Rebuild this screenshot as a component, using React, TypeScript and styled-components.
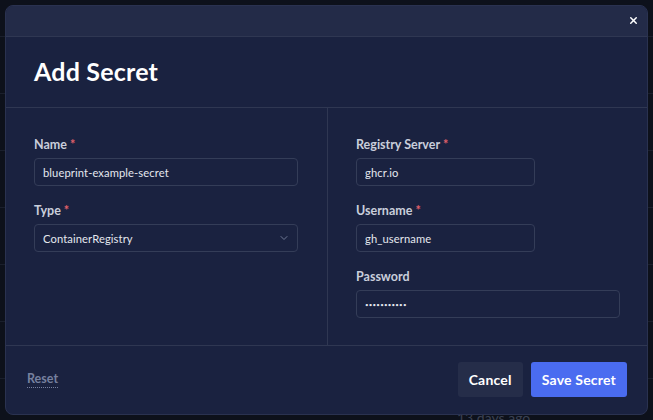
import React from "react";
import styled, { createGlobalStyle } from "styled-components";
import { X, ChevronDown } from "lucide-react";

const Global = createGlobalStyle`
  html, body { margin: 0; padding: 0; background: #0d111b; }
  body { font-family: "Lato", "Noto Sans", sans-serif; width: 653px; height: 420px; overflow: hidden; }
  * { box-sizing: border-box; }
`;

const Page = styled.div`
  width: 653px;
  height: 420px;
  position: relative;
  overflow: hidden;
  background: #0d111b;
  padding-top: 36px;
`;

const BgRow = styled.div`
  height: 57px;
  border-top: 1px solid #1a1f2c;
  padding: 30px 0 0 457px;
  color: #3b4152;
  font-size: 14px;
  line-height: 17px;
`;

const Modal = styled.div`
  position: absolute;
  left: 5px;
  top: 5px;
  width: 643px;
  height: 410px;
  background: #1a2240;
  border: 1px solid #2a3250;
  border-radius: 8px;
  overflow: hidden;
  display: flex;
  flex-direction: column;
`;

const TopBar = styled.div`
  height: 31px;
  flex: none;
  background: #232b48;
  border-bottom: 1px solid #2f3752;
  display: flex;
  align-items: center;
  justify-content: flex-end;
  padding: 0 8px 1px 0;
`;

const CloseBtn = styled.button`
  background: none;
  border: none;
  padding: 0;
  color: #ffffff;
  display: flex;
  cursor: pointer;
`;

const TitleArea = styled.div`
  height: 71px;
  flex: none;
  border-bottom: 1px solid #2f3752;
  display: flex;
  align-items: center;
  padding-left: 28px;
`;

const Title = styled.h1`
  margin: 0 0 3px;
  font-size: 25px;
  font-weight: 700;
  color: #ffffff;
  letter-spacing: 0.2px;
`;

const Body = styled.div`
  flex: 1;
  display: grid;
  grid-template-columns: 322px 1fr;
  border-bottom: 1px solid #2f3752;
`;

const Column = styled.div<{ $divider?: boolean }>`
  padding: 28px 28px 0 28px;
  display: flex;
  flex-direction: column;
  gap: 16px;
  border-right: ${(p) => (p.$divider ? "1px solid #2f3752" : "none")};
`;

const Field = styled.div`
  display: flex;
  flex-direction: column;
  gap: 4px;
`;

const Label = styled.label`
  font-size: 12.5px;
  font-weight: 700;
  line-height: 18px;
  color: #c9cedb;
`;

const Req = styled.span`
  color: #e0606a;
  margin-left: 3px;
`;

const Input = styled.input<{ $w: number; $dots?: boolean }>`
  width: ${(p) => p.$w}px;
  height: 28px;
  background: #1a2240;
  border: 1px solid #343d58;
  border-radius: 4px;
  color: #e4e7ee;
  font-family: "Lato", "Noto Sans", sans-serif;
  font-size: ${(p) => (p.$dots ? "6.2px" : "11.2px")};
  letter-spacing: ${(p) => (p.$dots ? "0.2px" : "0.1px")};
  padding: 0 8px;
  outline: none;
`;

const Select = styled.div<{ $w: number }>`
  width: ${(p) => p.$w}px;
  height: 28px;
  border: 1px solid #343d58;
  border-radius: 4px;
  color: #e4e7ee;
  font-size: 11.2px;
  letter-spacing: 0.1px;
  padding: 0 7px 0 8px;
  display: flex;
  align-items: center;
  justify-content: space-between;
`;

const Footer = styled.div`
  height: 68px;
  flex: none;
  display: flex;
  align-items: center;
  padding: 0 20px 2px 21px;
`;

const ResetLink = styled.a`
  font-size: 12.5px;
  font-weight: 700;
  color: #76809f;
  text-decoration: none;
  border-bottom: 1px dotted #76809f;
  padding-bottom: 1px;
  cursor: pointer;
`;

const Spacer = styled.div`
  flex: 1;
`;

const Actions = styled.div`
  display: flex;
  gap: 8px;
`;

const Button = styled.button<{ $primary?: boolean }>`
  height: 35px;
  border: none;
  border-radius: 3px;
  padding: 0 11px;
  font-family: "Lato", "Noto Sans", sans-serif;
  font-size: 14px;
  letter-spacing: 0.2px;
  font-weight: 700;
  color: #ffffff;
  background: ${(p) => (p.$primary ? "#4a6cf0" : "#252d49")};
  cursor: pointer;
`;

export default function App() {
  return (
    <>
      <Global />
      <Page>
        {Array.from({ length: 7 }).map((_, i) => (
          <BgRow key={i}>{i === 6 ? "13 days ago" : ""}</BgRow>
        ))}
        <Modal>
          <TopBar>
            <CloseBtn aria-label="Close">
              <X size={11} strokeWidth={3.2} />
            </CloseBtn>
          </TopBar>
          <TitleArea>
            <Title>Add Secret</Title>
          </TitleArea>
          <Body>
            <Column $divider>
              <Field>
                <Label>
                  Name<Req>*</Req>
                </Label>
                <Input $w={264} defaultValue="blueprint-example-secret" />
              </Field>
              <Field>
                <Label>
                  Type<Req>*</Req>
                </Label>
                <Select $w={264}>
                  <span>ContainerRegistry</span>
                  <ChevronDown size={12} color="#6f7995" strokeWidth={2} />
                </Select>
              </Field>
            </Column>
            <Column>
              <Field>
                <Label>
                  Registry Server<Req>*</Req>
                </Label>
                <Input $w={179} defaultValue="ghcr.io" />
              </Field>
              <Field>
                <Label>
                  Username<Req>*</Req>
                </Label>
                <Input $w={179} defaultValue="gh_username" />
              </Field>
              <Field>
                <Label>Password</Label>
                <Input $w={264} $dots type="password" defaultValue="mypassword1" />
              </Field>
            </Column>
          </Body>
          <Footer>
            <ResetLink>Reset</ResetLink>
            <Spacer />
            <Actions>
              <Button>Cancel</Button>
              <Button $primary>Save Secret</Button>
            </Actions>
          </Footer>
        </Modal>
      </Page>
    </>
  );
}
